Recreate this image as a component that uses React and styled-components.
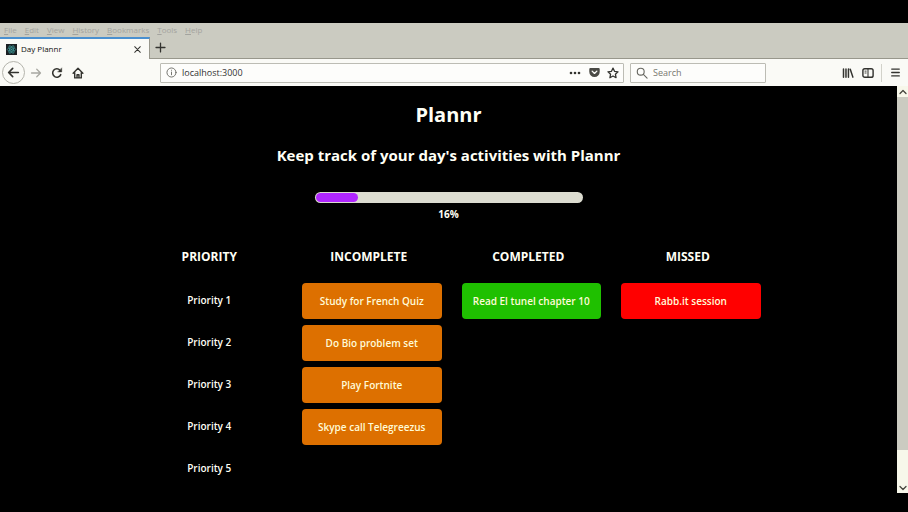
import React from "react";
import styled, { createGlobalStyle } from "styled-components";

const GlobalStyle = createGlobalStyle`
  *, *::before, *::after { box-sizing: border-box; }
  body {
    margin: 0;
    background: #000;
    font-family: "Open Sans", "Noto Sans", sans-serif;
  }
  button, input { font: inherit; }
`;

const Screen = styled.div`
  display: flex;
  flex-direction: column;
  height: 100vh;
  padding: 23px 0 19px;
  background: #000;
  overflow: hidden;
`;

const MenuBar = styled.nav`
  display: flex;
  align-items: center;
  gap: 8px;
  flex: none;
  height: 14px;
  padding: 0 4px;
  background: #cbcbc1;
`;

const MenuItem = styled.button`
  border: 0;
  padding: 0;
  background: none;
  color: #a3a39e;
  font-size: 8px;
  line-height: 14px;

  &::first-letter { text-decoration: underline; }
`;

const TabStrip = styled.div`
  display: flex;
  flex: none;
  height: 22px;
  background: #cbcbc1;
`;

const Tab = styled.div`
  display: flex;
  align-items: center;
  width: 150px;
  padding: 0 7px 0 6px;
  border-top: 2px solid #4a90d0;
  border-right: 1px solid #98978c;
  background: #fafaf6;
`;

const TabTitle = styled.span`
  flex: 1;
  margin-left: 4px;
  color: #111;
  font-size: 8px;
  line-height: 14px;
`;

const IconButton = styled.button`
  display: flex;
  align-items: center;
  justify-content: center;
  flex: none;
  width: ${(p) => p.$size || 20}px;
  height: ${(p) => p.$size || 20}px;
  padding: 0;
  border: ${(p) => (p.$ring ? "1px solid #b4b4ac" : "0")};
  border-radius: 50%;
  background: none;
  color: ${(p) => (p.$faint ? "#a8a8a2" : "#33332f")};

  svg { display: block; }
`;

const TabRest = styled.div`
  display: flex;
  align-items: center;
  flex: 1;
  border-bottom: 1px solid #98978c;
`;

const Toolbar = styled.div`
  display: flex;
  align-items: center;
  flex: none;
  height: 27px;
  padding: 0 3px 0 2px;
  background: #fafaf6;
`;

const NavButtons = styled.div`
  display: flex;
  align-items: center;
  flex: none;
  width: 158px;
`;

const Field = styled.label`
  display: flex;
  align-items: center;
  height: 20px;
  padding: 0 5px;
  border: 1px solid #bcbcb4;
  border-radius: 1px;
  background: #fdfdfb;
  color: #66665f;
`;

const AddressField = styled(Field)`
  flex: 1;
  padding-right: 0;
`;

const SearchField = styled(Field)`
  flex: none;
  width: 136px;
  margin-left: 6px;
`;

const TextInput = styled.input`
  flex: 1;
  min-width: 0;
  margin-left: 5px;
  padding: 0;
  border: 0;
  outline: 0;
  background: none;
  color: #333;
  font-size: 9px;
  line-height: 16px;

  &::placeholder { color: #77776f; opacity: 1; }
`;

const ToolGroup = styled.div`
  display: flex;
  align-items: center;
  justify-content: flex-end;
  flex: none;
  width: 139px;
`;

const Divider = styled.span`
  width: 1px;
  height: 18px;
  margin: 0 3px;
  background: #d2d2ca;
`;

const Viewport = styled.div`
  display: flex;
  flex: 1;
  min-height: 0;
`;

const Page = styled.main`
  flex: 1;
  min-width: 0;
  overflow: hidden;
  color: #fffff5;
  text-align: center;
`;

const Title = styled.h1`
  margin: 15px 0 0;
  font-size: 20px;
  font-weight: 700;
  line-height: 28px;
`;

const Subtitle = styled.h2`
  margin: 15px 0 0;
  font-size: 15px;
  font-weight: 700;
  line-height: 22px;
`;

const ProgressTrack = styled.div`
  width: 268px;
  height: 11px;
  margin: 26px auto 0;
  padding: 1px;
  border-radius: 6px;
  background: #dcdcd0;
`;

const ProgressFill = styled.div`
  height: 100%;
  border-radius: 5px;
  background: #b026ff;
`;

const ProgressLabel = styled.p`
  margin: 4px 0 0;
  font-size: 10px;
  font-weight: 700;
  line-height: 14px;
`;

const Board = styled.div`
  display: grid;
  grid-template-columns: repeat(4, 1fr);
  max-width: 638px;
  margin: 26px auto 0;
`;

const ColumnTitle = styled.h3`
  margin: 0 0 16px;
  font-size: 12px;
  font-weight: 700;
  line-height: 20px;
`;

const List = styled.ul`
  display: grid;
  grid-auto-rows: 36px;
  gap: 6px;
  margin: 0;
  padding: 0;
  list-style: none;
`;

const TaskList = styled(List)`
  padding: 0 7px 0 13px;
`;

const PriorityItem = styled.li`
  font-size: 10px;
  font-weight: 600;
  line-height: 34px;
`;

const tones = {
  incomplete: "#dd7000",
  completed: "#1fc000",
  missed: "#ff0000",
};

const TaskButton = styled.button`
  width: 100%;
  height: 100%;
  padding: 0;
  border: 0;
  border-radius: 4px;
  background: ${(p) => tones[p.$tone]};
  color: #fffbd8;
  font-size: 10px;
  font-weight: 600;
  line-height: 16px;
  white-space: nowrap;
`;

const Scrollbar = styled.div`
  display: flex;
  flex-direction: column;
  flex: none;
  width: 11px;
  background: #f7f7ea;
`;

const ScrollArrow = styled.button`
  display: flex;
  align-items: center;
  justify-content: center;
  flex: none;
  height: 11px;
  padding: 0;
  border: 0;
  background: none;
  color: #44443c;
`;

const ScrollThumb = styled.div`
  flex: 11;
  background: #cbcbc1;
`;

const Spacer = styled.div`
  flex: 1;
`;

const Icon = ({ size = 12, width = 1.5, children }) => (
  <svg width={size} height={size} viewBox="0 0 16 16" fill="none" stroke="currentColor"
    strokeWidth={width} strokeLinecap="round" strokeLinejoin="round" aria-hidden="true">
    {children}
  </svg>
);

const Favicon = () => (
  <svg width="11" height="11" viewBox="0 0 22 22" aria-hidden="true">
    <rect width="22" height="22" fill="#1b2023" />
    <g fill="none" stroke="#3f9d9c" strokeWidth="1.4">
      <ellipse cx="11" cy="11" rx="8.5" ry="3.3" />
      <ellipse cx="11" cy="11" rx="8.5" ry="3.3" transform="rotate(60 11 11)" />
      <ellipse cx="11" cy="11" rx="8.5" ry="3.3" transform="rotate(120 11 11)" />
    </g>
    <circle cx="11" cy="11" r="1.7" fill="#3f9d9c" />
  </svg>
);

const menuItems = ["File", "Edit", "View", "History", "Bookmarks", "Tools", "Help"];
const priorities = [1, 2, 3, 4, 5];
const columns = [
  {
    title: "INCOMPLETE",
    tone: "incomplete",
    tasks: ["Study for French Quiz", "Do Bio problem set", "Play Fortnite", "Skype call Telegreezus"],
  },
  { title: "COMPLETED", tone: "completed", tasks: ["Read El tunel chapter 10"] },
  { title: "MISSED", tone: "missed", tasks: ["Rabb.it session"] },
];
const progress = 16;

export default function App() {
  return (
    <Screen>
      <GlobalStyle />
      <MenuBar>
        {menuItems.map((item) => <MenuItem key={item}>{item}</MenuItem>)}
      </MenuBar>
      <TabStrip>
        <Tab>
          <Favicon />
          <TabTitle>Day Plannr</TabTitle>
          <IconButton $size={10} aria-label="Close tab">
            <Icon size={9} width={1.8}><path d="M3 3l10 10M13 3L3 13" /></Icon>
          </IconButton>
        </Tab>
        <TabRest>
          <IconButton aria-label="New tab">
            <Icon size={11} width={1.9}><path d="M8 1.5v13M1.5 8h13" /></Icon>
          </IconButton>
        </TabRest>
      </TabStrip>
      <Toolbar>
        <NavButtons>
          <IconButton $size={23} $ring aria-label="Back">
            <Icon size={13} width={2}><path d="M14 8H2.5M7 3L2 8l5 5" /></Icon>
          </IconButton>
          <IconButton $size={21} $faint aria-label="Forward">
            <Icon size={12} width={1.7}><path d="M2 8h11.5M9 3l5 5-5 5" /></Icon>
          </IconButton>
          <IconButton $size={21} aria-label="Reload">
            <Icon size={12} width={2.1}>
              <path d="M13 10.2A5.6 5.6 0 1 1 12 4.3" />
              <path d="M14.3 1.6v5H9.3z" fill="currentColor" strokeWidth="0.6" />
            </Icon>
          </IconButton>
          <IconButton $size={21} aria-label="Home">
            <Icon size={12} width={1.9}>
              <path d="M1.5 8.3L8 1.8l6.5 6.5M3.6 7.5v7h8.8v-7M6.7 14.3v-4h2.6v4" />
            </Icon>
          </IconButton>
        </NavButtons>
        <AddressField>
          <Icon size={11} width={1.3}>
            <circle cx="8" cy="8" r="6.6" />
            <path d="M8 7.3v4M8 4.6v.2" />
          </Icon>
          <TextInput aria-label="Address" defaultValue="localhost:3000" />
          <IconButton aria-label="Page actions">
            <svg width="12" height="4" viewBox="0 0 12 4" fill="currentColor" aria-hidden="true">
              <circle cx="2" cy="2" r="1.3" /><circle cx="6" cy="2" r="1.3" /><circle cx="10" cy="2" r="1.3" />
            </svg>
          </IconButton>
          <IconButton $size={18} aria-label="Save to Pocket">
            <svg width="11" height="11" viewBox="0 0 16 16" aria-hidden="true">
              <path d="M2 1.5h12a1.6 1.6 0 0 1 1.6 1.6V7a7.6 7.6 0 0 1-15.2 0V3.1A1.6 1.6 0 0 1 2 1.5z" fill="#4a4a45" />
              <path d="M4.6 6L8 9.3 11.4 6" fill="none" stroke="#fdfdfb" strokeWidth="2" strokeLinecap="round" strokeLinejoin="round" />
            </svg>
          </IconButton>
          <IconButton aria-label="Bookmark this page">
            <Icon size={12} width={1.7}>
              <path d="M8 1.5l2 4.3 4.7.6-3.5 3.2.9 4.7L8 12l-4.1 2.3.9-4.7L1.300 6.400 6 5.800z" />
            </Icon>
          </IconButton>
        </AddressField>
        <SearchField>
          <Icon size={12} width={1.5}>
            <circle cx="6.3" cy="6.3" r="4.6" /><path d="M9.8 9.8l5 5" />
          </Icon>
          <TextInput aria-label="Search" placeholder="Search" />
        </SearchField>
        <ToolGroup>
          <IconButton aria-label="Library">
            <Icon size={12} width={2}><path d="M2 2.5v11M5.3 2.5v11M8.600 2.5v11M11 3l3.500 10.500" /></Icon>
          </IconButton>
          <IconButton aria-label="Sidebars">
            <Icon size={12} width={1.9}>
              <rect x="1.2" y="2.3" width="13.6" height="11.4" rx="2.5" />
              <path d="M8 2.5v11" strokeWidth="1.4" />
              <path d="M4 5.5h1.5M4 8h1.5" strokeWidth="1.2" />
            </Icon>
          </IconButton>
          <Divider />
          <IconButton aria-label="Open menu">
            <Icon size={11} width={1.9}><path d="M2.5 3h11M2.5 8h11M2.5 13h11" /></Icon>
          </IconButton>
        </ToolGroup>
      </Toolbar>
      <Viewport>
        <Page>
          <Title>Plannr</Title>
          <Subtitle>Keep track of your day's activities with Plannr</Subtitle>
          <ProgressTrack role="progressbar" aria-label="Tasks done" aria-valuenow={progress} aria-valuemin={0} aria-valuemax={100}>
            <ProgressFill style={{ width: `${progress}%` }} />
          </ProgressTrack>
          <ProgressLabel>{progress}%</ProgressLabel>
          <Board>
            <section>
              <ColumnTitle>PRIORITY</ColumnTitle>
              <List>
                {priorities.map((n) => <PriorityItem key={n}>Priority {n}</PriorityItem>)}
              </List>
            </section>
            {columns.map(({ title, tone, tasks }) => (
              <section key={title}>
                <ColumnTitle>{title}</ColumnTitle>
                <TaskList>
                  {tasks.map((task) => (
                    <li key={task}><TaskButton $tone={tone}>{task}</TaskButton></li>
                  ))}
                </TaskList>
              </section>
            ))}
          </Board>
        </Page>
        <Scrollbar>
          <ScrollArrow aria-label="Scroll up">
            <Icon size={8} width={2.5}><path d="M2 11l6-6 6 6" /></Icon>
          </ScrollArrow>
          <ScrollThumb />
          <Spacer />
          <ScrollArrow aria-label="Scroll down">
            <Icon size={8} width={2.5}><path d="M2 5l6 6 6-6" /></Icon>
          </ScrollArrow>
        </Scrollbar>
      </Viewport>
    </Screen>
  );
}
